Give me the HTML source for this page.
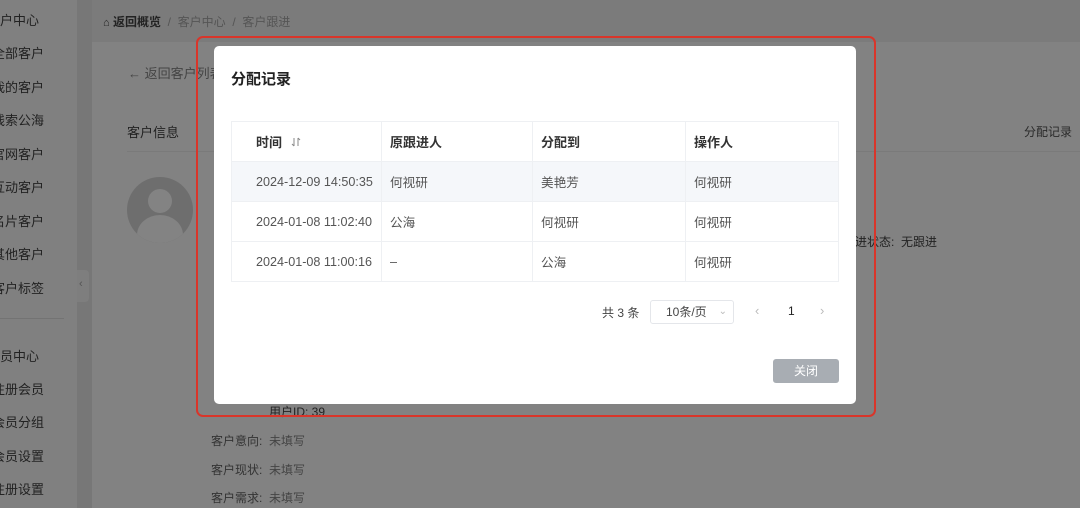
<!DOCTYPE html>
<html><head><meta charset="utf-8"><style>
*{margin:0;padding:0;box-sizing:border-box}
body{width:1080px;height:508px;overflow:hidden;position:relative;background:#7b7b7b;font-family:"Liberation Sans","Noto Sans CJK SC",sans-serif;color:#1f1f1f}
.abs{position:absolute;white-space:nowrap}
.side{left:0;top:0;width:77px;height:508px;background:#808080;overflow:hidden}
.side div{position:absolute;left:-8px;font-size:13px;color:#222}
.card{left:92px;top:42px;width:988px;height:466px;background:#828282}
.t{font-size:12px;color:#333}
.red{left:196px;top:36px;width:680px;height:381px;border:2px solid #d9352a;border-radius:7px}
.modal{left:214px;top:46px;width:642px;height:358px;background:#fff;border-radius:5px}
table{position:absolute;left:17px;top:75px;width:608px;border-collapse:collapse;font-size:12.6px}
td,th{height:40px;border:1px solid #eef0f3;text-align:left;padding-left:24px;color:#555;font-weight:normal}
th{font-weight:bold;color:#333;font-size:13px}
td+td,th+th{padding-left:8px}
tr.h td{background:#f5f7fa}
</style></head><body>
<div class="abs side">
<div style="top:10px;left:0">户中心</div>
<div style="top:43px">全部客户</div>
<div style="top:77px">我的客户</div>
<div style="top:110px">线索公海</div>
<div style="top:144px">官网客户</div>
<div style="top:177px">互动客户</div>
<div style="top:211px">名片客户</div>
<div style="top:244px">其他客户</div>
<div style="top:278px">客户标签</div>
<div style="top:318px;left:0;width:64px;height:1px;background:#737373"></div>
<div style="top:346px;left:0">员中心</div>
<div style="top:379px">注册会员</div>
<div style="top:412px">会员分组</div>
<div style="top:446px">会员设置</div>
<div style="top:479px">注册设置</div>
</div>
<div class="abs" style="left:77px;top:0;width:15px;height:508px;background:#777"></div>
<div class="abs" style="left:77px;top:270px;width:12px;height:32px;background:#7e7e7e;border-radius:0 4px 4px 0;font-size:11px;color:#555;padding-top:8px;padding-left:2px">‹</div>
<div class="abs t" style="left:103px;top:13px;color:#222;font-weight:bold"><span style="font-size:11px">⌂</span> 返回概览 <span style="color:#555;font-weight:normal">&nbsp;/&nbsp; 客户中心 &nbsp;/&nbsp; 客户跟进</span></div>
<div class="abs card"></div>
<div class="abs" style="left:128px;top:63px;font-size:13px;color:#444">← 返回客户列表</div>
<div class="abs" style="left:127px;top:122px;font-size:13px;color:#222">客户信息</div>
<div class="abs" style="left:127px;top:151px;width:953px;height:1px;background:#7a7a7a"></div>
<div class="abs t" style="left:1024px;top:123px;color:#2a2a2a">分配记录</div>
<div class="abs" style="left:127px;top:177px;width:66px;height:66px;border-radius:50%;background:#6e6e6e;overflow:hidden">
<div class="abs" style="left:21px;top:12px;width:24px;height:24px;border-radius:50%;background:#838383"></div>
<div class="abs" style="left:10px;top:38px;width:46px;height:40px;border-radius:50%;background:#838383"></div></div>
<div class="abs t" style="left:855px;top:233px;color:#222">进状态:&nbsp; 无跟进</div>
<div class="abs t" style="left:269px;top:403px;color:#222">用户ID: 39</div>
<div class="abs t" style="left:211px;top:432px;color:#333">客户意向: <span style="color:#444">&nbsp;未填写</span></div>
<div class="abs t" style="left:211px;top:461px;color:#333">客户现状: <span style="color:#444">&nbsp;未填写</span></div>
<div class="abs t" style="left:211px;top:489px;color:#333">客户需求: <span style="color:#444">&nbsp;未填写</span></div>
<div class="abs red"></div>
<div class="abs modal">
<div class="abs" style="left:17px;top:22px;font-size:15px;color:#222;font-weight:bold">分配记录</div>
<table>
<tr><th style="width:150px">时间 <svg width="12" height="12" viewBox="0 0 12 12" style="vertical-align:-1px;margin-left:4px"><path d="M4 2v8M2 8l2 2M8 10V2M8 2l2 2" stroke="#888" stroke-width="1" fill="none"/></svg></th><th style="width:151px">原跟进人</th><th style="width:153px">分配到</th><th>操作人</th></tr>
<tr class="h"><td>2024-12-09 14:50:35</td><td>何视研</td><td>美艳芳</td><td>何视研</td></tr>
<tr><td>2024-01-08 11:02:40</td><td>公海</td><td>何视研</td><td>何视研</td></tr>
<tr><td>2024-01-08 11:00:16</td><td>–</td><td>公海</td><td>何视研</td></tr>
</table>
<div class="abs" style="left:388px;top:258px;font-size:12px;color:#444">共 3 条</div>
<div class="abs" style="left:436px;top:254px;width:84px;height:24px;border:1px solid #e4e6ea;border-radius:3px;font-size:12px;color:#444;line-height:22px;padding-left:15px">10条/页<span style="position:absolute;right:6px;top:0;color:#bbb;font-size:10px">⌄</span></div>
<div class="abs" style="left:541px;top:257px;font-size:13px;color:#bbb">‹</div>
<div class="abs" style="left:574px;top:258px;font-size:12px;color:#222">1</div>
<div class="abs" style="left:606px;top:257px;font-size:13px;color:#bbb">›</div>
<div class="abs" style="left:559px;top:313px;width:66px;height:24px;background:#a8adb3;border-radius:3px;color:#fff;font-size:12px;text-align:center;line-height:24px">关闭</div>
</div>
</body></html>
